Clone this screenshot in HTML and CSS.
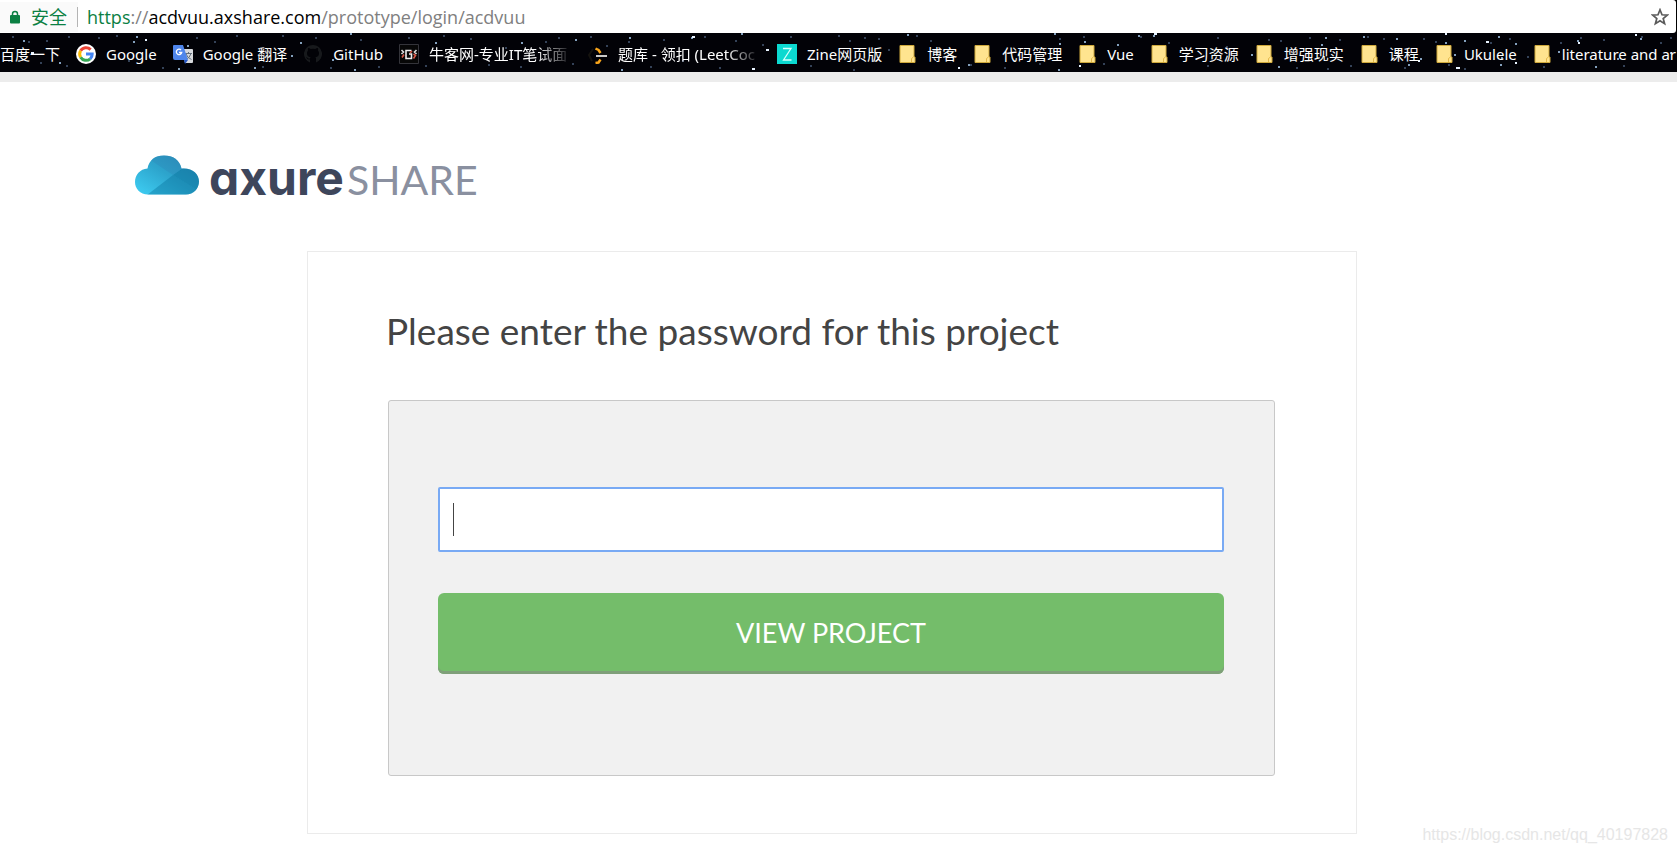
FILE: index.html
```html
<!DOCTYPE html>
<html lang="zh-CN">
<head>
<meta charset="utf-8">
<title>Axure Share</title>
<link rel="stylesheet" href="styles.css">
</head>
<body>
<svg class="defs" aria-hidden="true">
  <symbol id="folder" viewBox="0 0 20 20"><path d="M2 1.500h14v11.500h1v5.500H2z" fill="#ffe48f" stroke="#cfa93c"/><path d="M13.500 18v-3.500l2-1.500" fill="none" stroke="#e3b84a"/></symbol>
</svg>
<header class="browser">
  <div class="omnibox">
    <div class="secure">
      <svg class="lock" viewBox="0 0 10 14" aria-hidden="true"><path d="M2.500 7V4a2.500 2.500 0 0 1 5 0v3" fill="none" stroke="#0b8043" stroke-width="1.500"/><rect y="5" width="10" height="8.500" rx="1" fill="#0b8043"/></svg>
      <span>安全</span>
    </div>
    <div class="url"><span class="scheme">https</span>://<span class="host">acdvuu.axshare.com</span>/prototype/login/acdvuu</div>
    <button class="star" aria-label="Bookmark"><svg viewBox="0 0 18 18"><path d="M9 1.800l2 5 5.300.300-4.100 3.400 1.400 5.200L9 12.800l-4.600 2.900 1.400-5.200L1.700 7.100 7 6.800z" fill="none" stroke="#5a5a5a" stroke-width="1.700"/></svg></button>
  </div>
  <nav class="bookmarks">
    <svg class="sky" width="1677" height="39" aria-hidden="true">
      <path stroke="#344258" stroke-width="2" d="M12 4h2M28 9h2M46 8h2M68 4h2M40 30h2M8 28h2M66 33h2M98 5h2M116 3h2M128 28h2M162 35h2M196 5h2M214 9h2M236 3h2M262 34h2M282 3h2M315 5h2M330 35h2M360 7h2M378 34h2M408 5h2M425 33h2M443 3h2M470 6h2M488 32h2M505 15h2M520 34h2M545 9h2M558 5h2M572 31h2M590 4h2M606 13h2M628 9h2M650 34h2M663 7h2M682 28h2M704 4h2M719 35h2M735 8h2M762 12h2M790 4h2M810 33h2M838 3h2M849 8h2M864 5h2M878 6h2M888 17h2M916 3h2M930 8h2M853 37h2M970 32h2M1004 35h2M1039 31h2M1059 6h2M1083 4h2M1103 31h2M1140 4h2M1168 10h2M1207 33h2M1217 5h2M1226 14h2M1251 22h2M1268 7h2M1280 8h2M1296 35h2M1309 5h2M1327 36h2M1339 7h2M1350 33h2M1367 4h2M1383 6h2M1404 35h2M1423 6h2M1435 9h2M1448 32h2M1464 36h2M1490 10h2M1509 6h2M1527 24h2M1543 34h2M1560 10h2M1580 5h2M1603 7h2M1623 33h2M1641 4h2M1660 10h2M1670 5h2"/>
      <path stroke="#84a0bd" stroke-width="2" d="M23 8h2M59 30h2M133 9h2M145 7h2M136 4h2M187 13h2M178 36h2M254 35h2M300 10h2M291 23h2M332 27h2M350 1h2M354 37h2M435 10h2M521 10h2M575 7h2M629 5h2M621 37h2M691 5h2M741 1h2M766 17h2M907 2h2M968 32h2M1054 1h2M1059 11h2M1084 9h2M1058 37h2M1117 12h2M1138 3h2M1153 3h2M1278 34h2M1251 22h2M1325 5h2M1321 12h2M1363 4h2M1396 6h2M1408 32h2M1420 26h2M1445 10h2M1454 22h2M1464 8h2M1501 25h2M1500 32h2M1515 11h2M1498 4h2M1558 19h2M1577 8h2M1595 34h2M1617 26h2M1640 6h2M1670 20h2"/>
      <path stroke="#e8f3ff" stroke-width="2" d="M31 20h3M145 7h2M692 4h3M752 36h3M766 17h3M958 35h2M1079 33h2M1154 1h3M1396 20h2M1418 28h2M1456 35h4M1486 9h3M1445 1h2M1578 10h2M1515 30h2M1635 2h2"/>
    </svg>
    <a href="#" class="bm">百度一下</a>
    <a href="#" class="bm"><svg viewBox="0 0 20 20"><circle cx="10" cy="10" r="10" fill="#fff"/><g fill="none" stroke-width="3"><path d="M14.600 5.600A6.300 6.300 0 0 0 4.600 6.800" stroke="#ea4335"/><path d="M4.600 6.800a6.300 6.300 0 0 0 0 6.400" stroke="#fbbc05"/><path d="M4.600 13.200a6.300 6.300 0 0 0 9.600 1.600" stroke="#34a853"/><path d="M14.200 14.800A6.300 6.300 0 0 0 16.200 10H10" stroke="#4285f4"/></g></svg><span>Google</span></a>
    <a href="#" class="bm"><svg viewBox="0 0 20 20"><path d="M8 5h11a1 1 0 0 1 1 1v12a1 1 0 0 1-1 1h-7z" fill="#d8dadd"/><path d="M12 9.500h7M15.500 8v1.500M18 9.500q-1 4-5 6M13 10q1.500 4 5.500 5.500" stroke="#65717e" fill="none"/><path d="M1 1h9l5 15H2a2 2 0 0 1-2-2V2a1 1 0 0 1 1-1z" fill="#4f86ec"/><path d="M11 16h4l-3 4z" fill="#2456c5"/><path d="M8 6a2.700 2.700 0 1 0 .700 2.500H6" fill="none" stroke="#fff" stroke-width="1.300"/></svg><span>Google 翻译</span></a>
    <a href="#" class="bm"><svg viewBox="0 0 20 20"><path fill="#17191c" d="M10 1a9 9 0 0 0-3 17.500v-3c-3 .600-3.300-2-4-2.300 1.500-.400 2 2 4 1.300l.600-1.300C5 12.800 4 11.500 4 9c0-1 .300-1.800 1-2.500-.200-.900-.200-1.800.200-2.500 1 0 1.800.500 2.500 1a9 9 0 0 1 4.600 0c.700-.500 1.500-1 2.500-1 .400.700.400 1.600.200 2.500.700.700 1 1.500 1 2.500 0 2.500-1 3.800-3.600 4.200.5.500.6 1 .6 2v3.300A9 9 0 0 0 10 1z"/></svg><span>GitHub</span></a>
    <a href="#" class="bm"><svg viewBox="0 0 20 20"><path d="M.500.500h19v19H.500z" fill="#070707" stroke="#34343a"/><g fill="none" stroke-width="1.600"><path d="M12.500 6.500H7v8h5.500V10H10" stroke="#eee"/><path d="M2.500 6l2 2-2 2M17.500 6l-2 2 2 2" stroke="#ddd"/><path d="M5 10.500l-2 3M14.500 10l2 1.500-2 3M11 9l2-2" stroke="#d95745"/></g></svg><span class="fade">牛客网-专业IT笔试面</span></a>
    <a href="#" class="bm"><svg viewBox="0 0 20 20"><path d="M7.500 4.500l3 1.500 2 3M7.500 19l3-.500 2-3" fill="none" stroke="#f9a51a" stroke-width="2.500"/><path d="M8 12h11" stroke="#c9c9c9" stroke-width="2"/><path d="M5 5L1 11l3 6" fill="none" stroke="#15130f" stroke-width="2"/></svg><span class="fade">题库 - 领扣 (LeetCoc</span></a>
    <a href="#" class="bm"><svg viewBox="0 0 20 20"><path d="M0 0h20v20H0z" fill="#0bd9d0"/><path d="M6 4.500h8L6.500 16H14.500" fill="none" stroke="#d4fffc" stroke-width="1.300"/></svg><span>Zine网页版</span></a>
    <a href="#" class="bm folder"><svg><use href="#folder"/></svg><span>博客</span></a>
    <a href="#" class="bm folder"><svg><use href="#folder"/></svg><span>代码管理</span></a>
    <a href="#" class="bm folder"><svg><use href="#folder"/></svg><span>Vue</span></a>
    <a href="#" class="bm folder"><svg><use href="#folder"/></svg><span>学习资源</span></a>
    <a href="#" class="bm folder"><svg><use href="#folder"/></svg><span>增强现实</span></a>
    <a href="#" class="bm folder"><svg><use href="#folder"/></svg><span>课程</span></a>
    <a href="#" class="bm folder"><svg><use href="#folder"/></svg><span>Ukulele</span></a>
    <a href="#" class="bm folder"><svg><use href="#folder"/></svg><span>literature and ar</span></a>
  </nav>
</header>
<main class="page">
  <div class="brand">
    <svg class="cloud" viewBox="0 0 64 40" aria-hidden="true">
      <defs>
        <linearGradient id="sky" x1="0" y1="1" x2="1" y2="0"><stop offset="0" stop-color="#3fd0f5"/><stop offset=".5" stop-color="#2da5cd"/><stop offset="1" stop-color="#2a83b0"/></linearGradient>
        <clipPath id="shape"><path d="M13 39.500C5 39.500 0 33.500 0 27c0-7 5-13 12.500-13.500C14 5 20 .500 29 .500c9 0 16 4.500 17.500 13C57 12.500 64 18.500 64 26.500c0 7-5.500 13-13 13z"/></clipPath>
      </defs>
      <g clip-path="url(#shape)"><path d="M0 0h64v40H0z" fill="url(#sky)"/><path d="M12 40L38 20 64 36v4z" fill="#08719b" opacity=".4"/><path d="M38 20L64 2v34z" fill="#08719b" opacity=".5"/><path d="M14 4l24 16L64 2V0H20z" fill="#2f86b8" opacity=".35"/></g>
    </svg>
    <span class="axure">axure</span><span class="share">SHARE</span>
  </div>
  <section class="card">
    <h1><label for="password">Please enter the password for this project</label></h1>
    <form class="panel">
      <div class="field"><input id="password" type="password"><span class="caret"></span></div>
      <button type="button" class="submit">VIEW PROJECT</button>
    </form>
  </section>
</main>
<div class="watermark">https://blog.csdn.net/qq_40197828</div>
</body>
</html>
```
FILE: styles.css
```css
* { box-sizing: border-box; }
body {
  margin: 0;
  background: #fff;
  color: #444;
  font-family: "Noto Sans", "Noto Sans CJK SC", sans-serif;
  overflow: hidden;
}
.defs { position: absolute; width: 0; height: 0; }
.browser { background: #000; border-bottom: 10px solid #ececec; }
.omnibox {
  display: flex;
  align-items: center;
  height: 33px;
  margin-right: 1px;
  padding-right: 7px;
  background: #fff;
  border-radius: 0 3px 3px 0;
  font-family: "Open Sans", "Noto Sans CJK SC", sans-serif;
  font-size: 18px;
  line-height: 24px;
}
.secure {
  display: flex;
  align-items: center;
  gap: 11px;
  padding: 3px 0 3px 10px;
  background: #fafafa;
  color: #0b8043;
  width: 78px;
}
.secure span { white-space: nowrap; }
.lock { width: 10px; height: 14px; flex: none; }
.url {
  flex: 1;
  margin-left: -1px;
  padding-left: 9px;
  border-left: 1px solid #b4b4b4;
  line-height: 20px;
  color: #808080;
  white-space: nowrap;
}
.scheme { color: #0b8043; }
.host { color: #000; }
.star { border: 0; padding: 0; background: none; height: 18px; }
.star svg { display: block; width: 18px; height: 18px; }
.bookmarks {
  position: relative;
  display: flex;
  align-items: center;
  gap: 16px;
  height: 39px;
  padding-top: 2px;
  overflow: hidden;
  background: #020207;
}
.sky { position: absolute; left: 0; top: 0; }
.bm {
  position: relative;
  display: flex;
  flex: none;
  align-items: center;
  gap: 10px;
  color: #fff;
  font-size: 15px;
  line-height: 20px;
  text-decoration: none;
  white-space: nowrap;
}
.folder { gap: 9px; }
.bm svg { width: 20px; height: 20px; flex: none; }
.fade {
  min-width: 143px;
  -webkit-mask-image: linear-gradient(to right, #000 75%, transparent);
  mask-image: linear-gradient(to right, #000 75%, transparent);
}
.page { padding: 72px 320px 0 307px; }
.brand {
  display: flex;
  align-items: baseline;
  height: 97px;
  margin-left: -172px;
  white-space: nowrap;
  line-height: 48px;
}
.cloud { width: 64px; height: 40px; margin: 0 10px -2px 0; }
.axure {
  color: #3e465b;
  font-family: Inter, sans-serif;
  font-size: 48px;
  font-weight: 700;
  font-feature-settings: "cv11";
}
.share {
  margin-left: 3px;
  color: #8a90a0;
  font-family: Lato, sans-serif;
  font-size: 41px;
}
.card { padding: 52px 81px 57px 80px; border: 1px solid #ebebeb; }
h1 {
  margin: 0 0 43px -2px;
  font-family: Lato, sans-serif;
  font-size: 37px;
  font-weight: 400;
  line-height: 53px;
  white-space: nowrap;
}
.panel {
  padding: 86px 50px 101px 49px;
  background: #f1f1f1;
  border: 1px solid #c8c8c8;
  border-radius: 3px;
}
.field { position: relative; margin-bottom: 41px; }
.field input {
  display: block;
  width: 100%;
  height: 65px;
  padding: 0 14px;
  border: 2px solid #79aaf4;
  border-radius: 2px;
  background: #fff;
  font-size: 28px;
  outline: 0;
}
.caret { position: absolute; left: 15px; top: 16px; width: 1px; height: 33px; background: #444; }
.submit {
  display: block;
  width: 100%;
  height: 81px;
  padding-bottom: 3px;
  border: 0;
  border-radius: 6px;
  background: #74bd6a;
  box-shadow: inset 0 -3px 0 #7f9f79;
  color: #fff;
  font-family: Lato, sans-serif;
  font-size: 27px;
}
.watermark {
  position: absolute;
  right: 9px;
  bottom: 9px;
  color: #e6e6e6;
  font-family: "Liberation Sans", sans-serif;
  font-size: 16px;
  line-height: 20px;
}
```
